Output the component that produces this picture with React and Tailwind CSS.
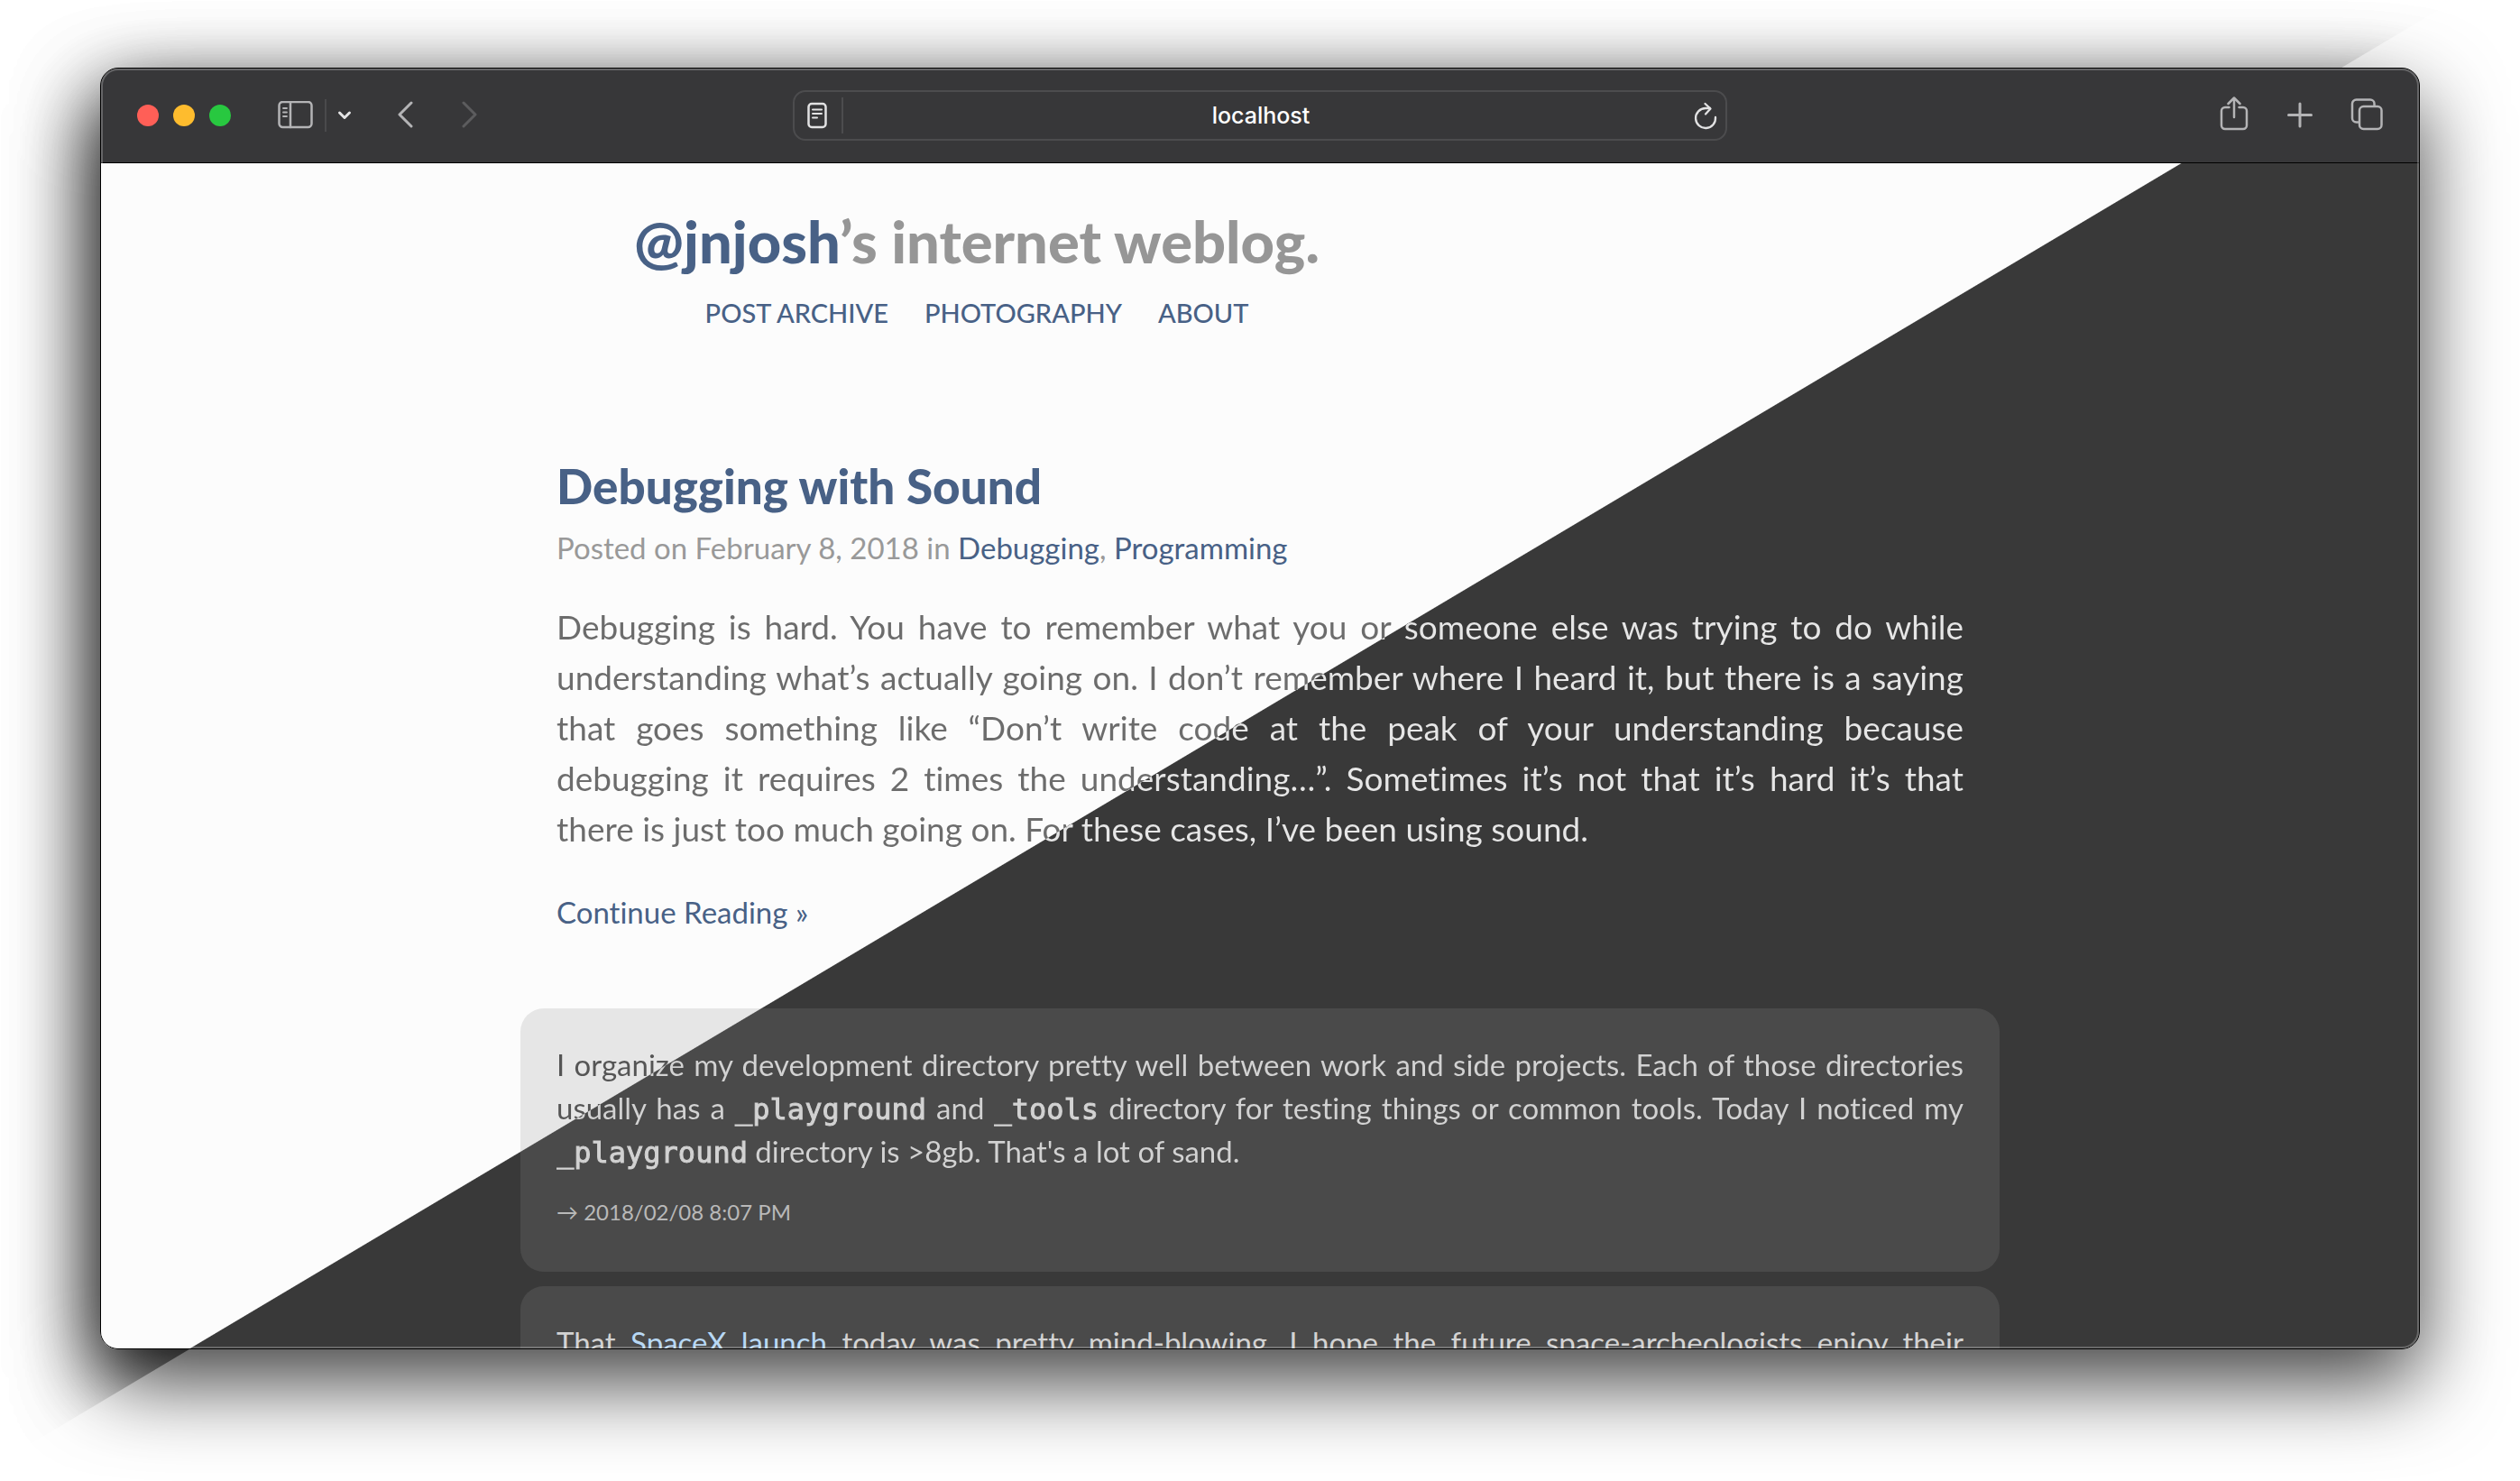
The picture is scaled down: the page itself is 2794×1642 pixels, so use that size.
const DIAGONAL_TEXT = "bg-fixed bg-clip-text text-transparent";

function Icon({ w, h, className = "", children }) {
  return (
    <svg
      width={w}
      height={h}
      viewBox={`0 0 ${w} ${h}`}
      fill="none"
      stroke="currentColor"
      strokeWidth="2.5"
      strokeLinecap="round"
      strokeLinejoin="round"
      aria-hidden="true"
      className={className}
    >
      {children}
    </svg>
  );
}

function Toolbar() {
  return (
    <header className="grid h-[105px] grid-cols-[1fr_1036px_1fr] items-center border-b border-black bg-[#373739] px-10 text-[#b4b4b6]">
      <div className="flex items-center">
        <div className="flex gap-4">
          <button aria-label="Close" className="size-6 rounded-full bg-[#ff5f57]" />
          <button aria-label="Minimize" className="size-6 rounded-full bg-[#febc2e]" />
          <button aria-label="Zoom" className="size-6 rounded-full bg-[#28c840]" />
        </div>
        <button aria-label="Show sidebar" className="ml-13">
          <Icon w={40} h={32}>
            <rect x="1.5" y="1" width="36" height="28" rx="4" />
            <path d="M14 1v28" />
            <path d="M6 8h4M6 12.500h4M6 17h4" strokeWidth="1.800" />
          </Icon>
        </button>
        <span className="ml-3 h-9 w-0.5 bg-[#4a4a4c]" />
        <button aria-label="Sidebar options" className="ml-3 text-[#e4e4e5]">
          <Icon w={16} h={12}>
            <path d="M2.500 3 8 8.500 13.500 3" strokeWidth="3" />
          </Icon>
        </button>
        <button aria-label="Back" className="ml-12">
          <Icon w={20} h={32}>
            <path d="M18 2 5 15l13 13" strokeWidth="3" />
          </Icon>
        </button>
        <button aria-label="Forward" className="ml-13 text-[#5c5c5e]" disabled>
          <Icon w={20} h={32}>
            <path d="M4 2l13 13L4 28" strokeWidth="3" />
          </Icon>
        </button>
      </div>

      <div className="flex h-14 items-center rounded-[14px] border-2 border-[#4c4c4e] text-[#e2e2e3]">
        <button aria-label="Reader" className="ml-3.5">
          <Icon w={22} h={30}>
            <rect x="1.500" y="2" width="19" height="26" rx="3.500" />
            <path d="M6 8.500h10M6 13h10M6 17.500h5" strokeWidth="2" />
          </Icon>
        </button>
        <span className="ml-4 h-10 w-0.5 bg-[#4c4c4e]" />
        <input
          aria-label="Address"
          defaultValue="localhost"
          className="min-w-0 flex-1 bg-transparent pt-0.5 pr-4 text-center font-['Inter',sans-serif] text-[25px] font-medium text-white outline-none"
        />
        <button aria-label="Reload" className="mr-2">
          <Icon w={28} h={32}>
            <path d="M25 18A11 11 0 1 1 14 8H19" strokeWidth="2.300" />
            <path d="M13.500 3 19.500 8.500 14 14.500" strokeWidth="2.300" />
          </Icon>
        </button>
      </div>

      <div className="flex items-center justify-end gap-10 pb-0.5">
        <button aria-label="Share">
          <Icon w={34} h={40}>
            <path d="M11.500 12H7a4 4 0 0 0-4 4v16a4 4 0 0 0 4 4h20a4 4 0 0 0 4-4V16a4 4 0 0 0-4-4h-4.500" />
            <path d="M17 23V2M10.500 8 17 1.500 23.500 8" />
          </Icon>
        </button>
        <button aria-label="New tab">
          <Icon w={32} h={32}>
            <path d="M16 4v25M3.500 16.500h25" strokeWidth="3" />
          </Icon>
        </button>
        <button aria-label="Show all tabs">
          <Icon w={36} h={36}>
            <rect x="10" y="9" width="24.500" height="25" rx="4.500" />
            <path d="M9.500 26.500H6.500A4.500 4.500 0 0 1 2 22V6A4.500 4.500 0 0 1 6.500 1.500h15.500A4.500 4.500 0 0 1 26.500 6v2.500" />
          </Icon>
        </button>
      </div>
    </header>
  );
}

function Code({ children }) {
  return (
    <code className="font-['DejaVu_Sans_Mono',monospace] text-[32px] leading-none [-webkit-text-stroke:1px_transparent]">
      {children}
    </code>
  );
}

function Note({ children }) {
  return (
    <section className="rounded-[26px] bg-[linear-gradient(149.24deg,#e6e6e6_calc(50%_-_28px),#4a4a4a_calc(50%_-_27px))] bg-fixed px-10 pt-[38px] pb-[42px] text-[33px] leading-12 text-[#d2d2d2]">
      {children}
    </section>
  );
}

function Blog() {
  return (
    <main className="mx-auto w-[1640px] max-w-full font-['Lato',sans-serif] [font-variant-ligatures:none]">
      <div className="px-10">
        <div className="flex w-3/5 flex-col items-center pt-12 pr-1">
          <h1 className="text-[65px] leading-[76px] font-black whitespace-nowrap text-[#969696]">
            <a href="#home" className="text-[#486186]">@jnjosh</a>’s internet weblog.
          </h1>
          <nav className="mt-[22px] flex gap-10 text-[29px] leading-10 font-medium whitespace-nowrap text-[#486186]">
            <a href="#archive">POST ARCHIVE</a>
            <a href="#photography">PHOTOGRAPHY</a>
            <a href="#about">ABOUT</a>
          </nav>
        </div>

        <article className="mt-[142px]">
          <h2 className="text-[53px] leading-[60px] font-black text-[#486186]">
            <a href="#debugging-with-sound">Debugging with Sound</a>
          </h2>
          <p className="mt-3.5 text-[33px] leading-12 text-[#999999]">
            Posted on February 8, 2018 in{" "}
            <a href="#debugging" className="text-[#486186]">Debugging</a>,{" "}
            <a href="#programming" className="text-[#486186]">Programming</a>
          </p>
          <p
            className={`mt-9 bg-[linear-gradient(149.24deg,#6c6c6c_calc(50%_-_28px),#e6e6e6_calc(50%_-_27px))] text-justify text-[37px] leading-14 ${DIAGONAL_TEXT}`}
          >
            Debugging is hard. You have to remember what you or someone else was trying to do while
            understanding what’s actually going on. I don’t remember where I heard it, but there is a
            saying that goes something like “Don’t write code at the peak of your understanding because
            debugging it requires 2 times the understanding…”. Sometimes it’s not that it’s hard it’s
            that there is just too much going on. For these cases, I’ve been using sound.
          </p>
          <p className="mt-10 text-[33px] leading-12 text-[#486186]">
            <a href="#continue">Continue Reading »</a>
          </p>
        </article>
      </div>

      <div className="mt-[83px] flex flex-col gap-4">
        <Note>
          <p
            className={`bg-[linear-gradient(149.24deg,#555555_calc(50%_-_28px),#d2d2d2_calc(50%_-_27px))] text-justify ${DIAGONAL_TEXT}`}
          >
            I organize my development directory pretty well between work and side projects. Each of
            those directories usually has a <Code>_playground</Code> and <Code>_tools</Code> directory
            for testing things or common tools. Today I noticed my <Code>_playground</Code> directory
            is &gt;8gb. That's a lot of sand.
          </p>
          <p className="mt-5 text-[24px] leading-12 text-[#b9b9b9]">
            <a href="#note">→ 2018/02/08 8:07 PM</a>
          </p>
        </Note>
        <Note>
          <p className="text-justify [text-align-last:justify]">
            That <a href="#spacex" className="text-[#b8d8f4]">SpaceX launch</a> today was pretty
            mind-blowing. I hope the future space-archeologists enjoy their
          </p>
        </Note>
      </div>
    </main>
  );
}

export default function App() {
  return (
    <div className="flex h-screen flex-col overflow-hidden bg-white px-[111px] pt-[75px] pb-[146px]">
      <div className="relative isolate flex min-h-0 flex-1 flex-col rounded-[20px] shadow-[0_36px_92px_rgba(0,0,0,0.75)]">
        {/* The light half casts a second, stronger shadow */}
        <div className="pointer-events-none absolute inset-0 -z-10 rounded-[20px] shadow-[0_36px_92px_rgba(0,0,0,0.75)] [clip-path:polygon(-300px_-200px,calc(100%_+_249px)_-200px,-237px_calc(100%_+_200px),-300px_calc(100%_+_200px))]" />
        <div className="flex min-h-0 flex-1 flex-col overflow-hidden rounded-[20px] border border-black bg-[#393939]">
          <Toolbar />
          <div className="min-h-0 flex-1 overflow-hidden bg-[linear-gradient(149.24deg,#fcfcfc_calc(50%_-_28px),#393939_calc(50%_-_27px))] bg-fixed">
            <Blog />
          </div>
        </div>
        <div className="pointer-events-none absolute inset-px rounded-[19px] shadow-[inset_0_0_0_2px_rgba(255,255,255,0.24)]" />
      </div>
    </div>
  );
}
